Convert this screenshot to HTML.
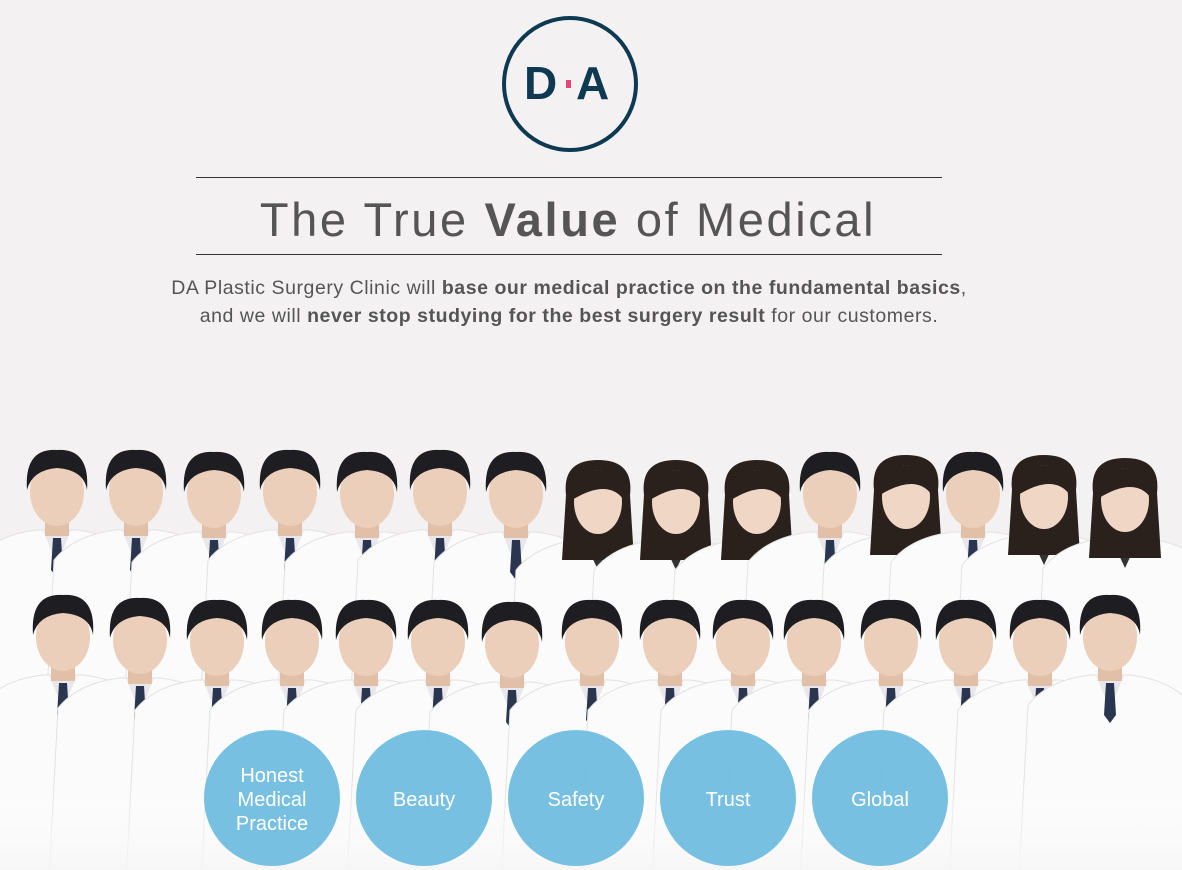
<!DOCTYPE html>
<html><head><meta charset="utf-8"><style>
html,body{margin:0;padding:0;}
body{width:1182px;height:870px;background:#f3f1f1;position:relative;overflow:hidden;font-family:"Liberation Sans",sans-serif;color:#555;}
.logo{position:absolute;left:502px;top:16px;width:128px;height:128px;border:4px solid #0d3a52;border-radius:50%;}
.logo span{position:absolute;top:40px;font-size:46px;font-weight:bold;color:#0d3a52;line-height:1;}
.hr{position:absolute;left:196px;width:746px;height:1px;background:#333;}
h1{position:absolute;top:192px;left:0;width:1136px;text-align:center;margin:0;font-weight:normal;font-size:47px;color:#555;letter-spacing:2.6px;}
h1 b{font-weight:bold;}
.sub{position:absolute;top:274px;left:0;width:1138px;text-align:center;font-size:19.5px;line-height:28px;color:#555;letter-spacing:0.55px;}
.sub b{color:#555;}
svg.ppl{position:absolute;left:0;top:420px;}
.c{position:absolute;top:730px;width:136px;height:136px;border-radius:50%;background:rgba(110,187,224,0.93);color:#fff;display:flex;align-items:center;justify-content:center;text-align:center;font-size:20px;line-height:24px;padding-top:3px;box-sizing:border-box;}
</style></head><body>
<div class="logo"><span style="left:18px">D</span><span style="left:60px;top:60px;width:5px;height:8px;background:#e8457a"></span><span style="left:70px">A</span></div>
<div class="hr" style="top:177px"></div>
<h1>The True <b>Value</b> of Medical</h1>
<div class="hr" style="top:254px"></div>
<div class="sub">DA Plastic Surgery Clinic will <b>base our medical practice on the fundamental basics</b>,<br>and we will <b>never stop studying for the best surgery result</b> for our customers.</div>
<svg class="ppl" width="1182" height="450" viewBox="0 420 1182 450">
<defs>
<symbol id="p" overflow="visible">
<path d="M-82,70 Q-62,45 -20,40 L20,40 Q62,45 82,70 L92,260 L-92,260 Z" fill="#fbfbfb" stroke="#e2e2e2"/>
<path d="M-14,40 L0,75 L14,40 Z" fill="#e8e8ec"/>
<path d="M-4,48 L4,48 L6,80 L0,88 L-6,80 Z" fill="#2a3550"/>
<rect x="-12" y="20" width="24" height="26" fill="#e2c0a8"/>
<ellipse cx="0" cy="2" rx="27" ry="34" fill="#ebcfba"/>
<path d="M-30,0 Q-33,-42 0,-40 Q33,-42 30,0 Q27,-20 0,-22 Q-25,-20 -30,0Z" fill="#1e1e22"/>
</symbol>
<symbol id="f" overflow="visible">
<path d="M-82,70 Q-62,45 -20,40 L20,40 Q62,45 82,70 L92,260 L-92,260 Z" fill="#fbfbfb" stroke="#e2e2e2"/>
<path d="M-14,40 L0,70 L14,40 Z" fill="#333"/>
<rect x="-11" y="20" width="22" height="26" fill="#e8c8b2"/>
<path d="M-32,-5 Q-36,-40 0,-40 Q36,-40 32,-5 L36,60 L-36,60Z" fill="#2a201c"/>
<ellipse cx="0" cy="2" rx="24" ry="32" fill="#f0d6c4"/>
<path d="M-26,0 Q-24,-30 0,-30 Q24,-30 26,0 Q10,-22 -26,0Z" fill="#2a201c"/>
</symbol>
</defs>
<use href="#p" x="57" y="490"/><use href="#p" x="136" y="490"/><use href="#p" x="214" y="492"/><use href="#p" x="290" y="490"/><use href="#p" x="367" y="492"/><use href="#p" x="440" y="490"/><use href="#p" x="516" y="492"/><use href="#f" x="598" y="500"/><use href="#f" x="676" y="500"/><use href="#f" x="757" y="500"/><use href="#p" x="830" y="492"/><use href="#f" x="906" y="495"/><use href="#p" x="973" y="492"/><use href="#f" x="1044" y="495"/><use href="#f" x="1125" y="498"/>
<use href="#p" x="63" y="635"/><use href="#p" x="140" y="638"/><use href="#p" x="217" y="640"/><use href="#p" x="292" y="640"/><use href="#p" x="366" y="640"/><use href="#p" x="438" y="640"/><use href="#p" x="512" y="642"/><use href="#p" x="592" y="640"/><use href="#p" x="670" y="640"/><use href="#p" x="743" y="640"/><use href="#p" x="814" y="640"/><use href="#p" x="891" y="640"/><use href="#p" x="966" y="640"/><use href="#p" x="1040" y="640"/><use href="#p" x="1110" y="635"/>
<defs><linearGradient id="g" x1="0" y1="0" x2="0" y2="1"><stop offset="0" stop-color="#fff" stop-opacity="0"/><stop offset="1" stop-color="#f6f6f6" stop-opacity="0.9"/></linearGradient></defs>
<rect x="0" y="780" width="1182" height="90" fill="url(#g)"/>
</svg>
<div class="c" style="left:204px">Honest<br>Medical<br>Practice</div>
<div class="c" style="left:356px">Beauty</div>
<div class="c" style="left:508px">Safety</div>
<div class="c" style="left:660px">Trust</div>
<div class="c" style="left:812px">Global</div>
</body></html>
